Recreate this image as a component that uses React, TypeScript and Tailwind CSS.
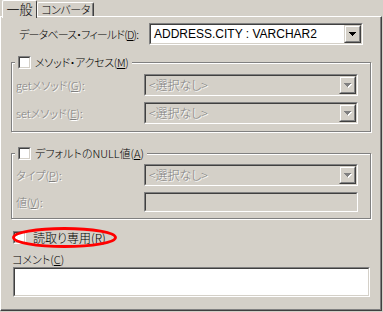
import type { ReactNode } from "react";

const jp = "font-['Noto_Sans_CJK_JP',sans-serif] font-light [font-feature-settings:'palt']";
const latin = "font-['Liberation_Sans','Noto_Sans_CJK_JP',sans-serif] font-normal";
const disabledText = "text-[#808080] [text-shadow:1px_1px_0_#fff]";

function Sunken({
	className = "",
	fill = "bg-white",
	children,
}: {
	className?: string;
	fill?: string;
	children?: ReactNode;
}) {
	return (
		<div
			className={`border border-t-[#808080] border-l-[#808080] border-r-white border-b-white ${className}`}
		>
			<div
				className={`h-full border border-t-[#404040] border-l-[#404040] border-r-[#d4d0c8] border-b-[#d4d0c8] ${fill}`}
			>
				{children}
			</div>
		</div>
	);
}

function DropButton({ disabled }: { disabled?: boolean }) {
	return (
		<div className="h-full w-[17px] border border-t-[#d4d0c8] border-l-[#d4d0c8] border-r-[#404040] border-b-[#404040] bg-[#d4d0c8]">
			<div className="flex h-full items-center justify-center border border-t-white border-l-white border-r-[#808080] border-b-[#808080]">
				<svg width="8" height="5" viewBox="0 0 8 5" shapeRendering="crispEdges">
					{disabled && <polygon points="1,1 8,1 4.5,5" fill="#fff" />}
					<polygon points="0,0 7,0 3.5,4" fill={disabled ? "#808080" : "#000"} />
				</svg>
			</div>
		</div>
	);
}

function Combo({ value, disabled }: { value: ReactNode; disabled?: boolean }) {
	return (
		<Sunken className="h-[22px] w-[214px]" fill={disabled ? "bg-[#d4d0c8]" : "bg-white"}>
			<div className="flex h-full items-center">
				<span
					className={`flex-1 whitespace-nowrap pl-[3px] text-[12px] leading-[14px] ${disabled ? `${jp} ${disabledText}` : `${latin} text-black`}`}
				>
					{value}
				</span>
				<DropButton disabled={disabled} />
			</div>
		</Sunken>
	);
}

function CheckBox() {
	return <Sunken className="h-[13px] w-[13px] shrink-0" />;
}

function Row({ label, children }: { label: ReactNode; children: ReactNode }) {
	return (
		<div className="flex items-center">
			<span
				className={`w-[132px] whitespace-nowrap pl-[4px] text-[11px] leading-[14px] ${disabledText}`}
			>
				{label}
			</span>
			{children}
		</div>
	);
}

function Group({
	legend,
	legendClass = "",
	className,
	children,
}: {
	legend: ReactNode;
	legendClass?: string;
	className: string;
	children: ReactNode;
}) {
	return (
		<div
			className={`relative ml-[10px] w-[360px] border border-[#808080] shadow-[1px_1px_0_#fff,inset_1px_1px_0_#fff] ${className}`}
		>
			<div className="absolute left-[3px] top-[-7px] flex items-center gap-[4px] bg-[#d4d0c8] px-[3px]">
				<CheckBox />
				<span
					className={`whitespace-nowrap text-[11px] leading-[13px] text-black ${legendClass}`}
				>
					{legend}
				</span>
			</div>
			{children}
		</div>
	);
}

export default function App() {
	return (
		<div className={`h-[312px] w-[383px] bg-[#d4d0c8] ${jp} text-black`}>
			<div className="flex h-[16px] items-end pl-[2px]">
				<div className="relative z-10 -mb-[2px] h-[18px] w-[35px] whitespace-nowrap rounded-t-[2px] border-t border-l border-r border-t-white border-l-white border-r-[#404040] bg-[#d4d0c8] text-center text-[13px] leading-[16px]">
					一般
				</div>
				<div className="h-[14px] w-[57px] whitespace-nowrap rounded-t-[2px] border-t border-l border-r border-t-white border-l-white border-r-[#404040] shadow-[inset_-1px_0_0_#808080] text-center text-[11px] leading-[13px] tracking-[-0.5px]">
					コンバータ
				</div>
			</div>

			<div className="h-[295px] w-[382px] border border-t-white border-l-white border-r-[#404040] border-b-[#404040] shadow-[inset_-1px_-1px_0_#808080]">
				<div className="mt-[6px] flex items-center">
					<span className="w-[148px] whitespace-nowrap pl-[18px] text-[11px] leading-[14px] tracking-[-0.8px]">
						データベース・フィールド(<u>D</u>):
					</span>
					<Combo value="ADDRESS.CITY : VARCHAR2" />
				</div>

				<Group
					className="mt-[17px] flex flex-col gap-[6px] pt-[11px] pb-[7px]"
					legendClass="tracking-[-0.3px]"
					legend={
						<>
							メソッド・アクセス(<u>M</u>)
						</>
					}
				>
					<Row
						label={
							<>
								getメソッド(<u>G</u>):
							</>
						}
					>
						<Combo value="<選択なし>" disabled />
					</Row>
					<Row
						label={
							<>
								setメソッド(<u>E</u>):
							</>
						}
					>
						<Combo value="<選択なし>" disabled />
					</Row>
				</Group>

				<Group
					className="mt-[21px] flex flex-col gap-[6px] pt-[10px] pb-[6px]"
					legend={
						<>
							デフォルトのNULL値(<u>A</u>)
						</>
					}
				>
					<Row
						label={
							<>
								タイプ(<u>P</u>):
							</>
						}
					>
						<Combo value="<選択なし>" disabled />
					</Row>
					<Row
						label={
							<>
								値(<u>V</u>):
							</>
						}
					>
						<Sunken className="h-[20px] w-[214px]" fill="bg-[#d4d0c8]" />
					</Row>
				</Group>

				<div className="relative ml-[12px] mt-[12px] flex h-[13px] items-center gap-[7px]">
					<CheckBox />
					<span className="whitespace-nowrap text-[12px] leading-[14px]">
						読取り専用(<u>R</u>)
					</span>
					<svg
						className="absolute left-[-1px] top-[-4px]"
						width="106"
						height="22"
						viewBox="0 0 106 22"
					>
						<ellipse cx="52.5" cy="10.5" rx="51" ry="9" fill="none" stroke="#ff0000" strokeWidth="2.8" />
					</svg>
				</div>

				<div className="ml-[11px] mt-[8px] whitespace-nowrap text-[11px] leading-[14px]">
					コメント(<u>C</u>)
				</div>
				<Sunken className="ml-[12px] mt-[1px] h-[30px] w-[357px]" />
			</div>
		</div>
	);
}
